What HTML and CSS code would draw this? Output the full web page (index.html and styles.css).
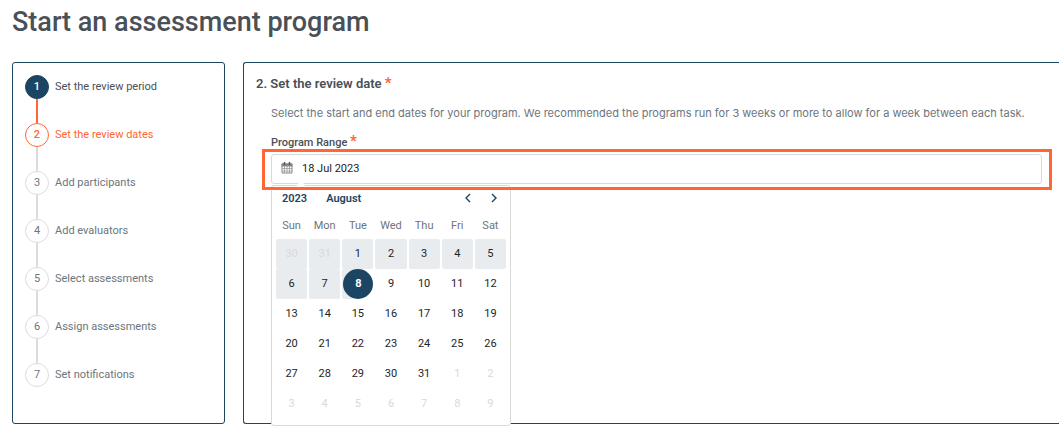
FILE: index.html
```html
<!DOCTYPE html>
<html lang="en">
<head>
    <meta charset="utf-8">
    <title>Start an assessment program</title>
    <link rel="stylesheet" href="styles.css">
</head>
<body>
    <h1 class="page-title">Start an assessment program</h1>

    <div class="layout">
        <nav class="panel steps-panel">
            <ol class="steps">
                <li class="step done"><span class="marker"><span class="number">1</span></span><span class="step-label">Set the review period</span></li>
                <li class="step active"><span class="marker"><span class="number">2</span></span><span class="step-label">Set the review dates</span></li>
                <li class="step"><span class="marker"><span class="number">3</span></span><span class="step-label">Add participants</span></li>
                <li class="step"><span class="marker"><span class="number">4</span></span><span class="step-label">Add evaluators</span></li>
                <li class="step"><span class="marker"><span class="number">5</span></span><span class="step-label">Select assessments</span></li>
                <li class="step"><span class="marker"><span class="number">6</span></span><span class="step-label">Assign assessments</span></li>
                <li class="step"><span class="marker"><span class="number">7</span></span><span class="step-label">Set notifications</span></li>
            </ol>
        </nav>

        <main class="panel form-panel">
            <h2 class="section-title">2. Set the review date <span class="required">*</span></h2>
            <form class="date-form" action="#" method="post">
                <p class="description">Select the start and end dates for your program. We recommended the programs run for 3 weeks or more to allow for a week between each task.</p>
                <label class="field-label" for="range">Program Range <span class="required">*</span></label>
                <div class="date-field">
                    <div class="input-box">
                        <svg class="calendar-icon" width="12" height="12" viewBox="0 0 12 12" aria-hidden="true">
                            <path d="M1 2h10v9H1z" fill="#fff" stroke="#888"/>
                            <path d="M.5 1.500h11v3H.5z" fill="#888"/>
                            <path d="M3.500 0v3M8.500 0v3" stroke="#555" stroke-width="1.500"/>
                            <path d="M3.500 4v7M6 4v7M8.500 4v7M1 6.500h10M1 9h10" stroke="#999" stroke-width=".8"/>
                        </svg>
                        <input type="text" id="range" name="range" value="18 Jul 2023">
                    </div>

                    <div class="calendar">
                        <div class="calendar-header">
                            <button type="button" class="year">2023</button>
                            <button type="button" class="month">August</button>
                            <button type="button" class="arrow" aria-label="Previous month">
                                <svg width="8" height="10" viewBox="0 0 8 10"><path d="M6 1L2 5l4 4" fill="none" stroke="#1b4562" stroke-width="1.400"/></svg>
                            </button>
                            <button type="button" class="arrow" aria-label="Next month">
                                <svg width="8" height="10" viewBox="0 0 8 10"><path d="M2 1l4 4-4 4" fill="none" stroke="#1b4562" stroke-width="1.400"/></svg>
                            </button>
                        </div>
                        <table class="days">
                            <thead>
                                <tr><th>Sun</th><th>Mon</th><th>Tue</th><th>Wed</th><th>Thu</th><th>Fri</th><th>Sat</th></tr>
                            </thead>
                            <tbody>
                                <tr>
                                    <td><button type="button" class="day range other">30</button></td>
                                    <td><button type="button" class="day range other">31</button></td>
                                    <td><button type="button" class="day range">1</button></td>
                                    <td><button type="button" class="day range">2</button></td>
                                    <td><button type="button" class="day range">3</button></td>
                                    <td><button type="button" class="day range">4</button></td>
                                    <td><button type="button" class="day range">5</button></td>
                                </tr>
                                <tr>
                                    <td><button type="button" class="day range">6</button></td>
                                    <td><button type="button" class="day range">7</button></td>
                                    <td><button type="button" class="day range-end"><span class="selected">8</span></button></td>
                                    <td><button type="button" class="day">9</button></td>
                                    <td><button type="button" class="day">10</button></td>
                                    <td><button type="button" class="day">11</button></td>
                                    <td><button type="button" class="day">12</button></td>
                                </tr>
                                <tr>
                                    <td><button type="button" class="day">13</button></td>
                                    <td><button type="button" class="day">14</button></td>
                                    <td><button type="button" class="day">15</button></td>
                                    <td><button type="button" class="day">16</button></td>
                                    <td><button type="button" class="day">17</button></td>
                                    <td><button type="button" class="day">18</button></td>
                                    <td><button type="button" class="day">19</button></td>
                                </tr>
                                <tr>
                                    <td><button type="button" class="day">20</button></td>
                                    <td><button type="button" class="day">21</button></td>
                                    <td><button type="button" class="day">22</button></td>
                                    <td><button type="button" class="day">23</button></td>
                                    <td><button type="button" class="day">24</button></td>
                                    <td><button type="button" class="day">25</button></td>
                                    <td><button type="button" class="day">26</button></td>
                                </tr>
                                <tr>
                                    <td><button type="button" class="day">27</button></td>
                                    <td><button type="button" class="day">28</button></td>
                                    <td><button type="button" class="day">29</button></td>
                                    <td><button type="button" class="day">30</button></td>
                                    <td><button type="button" class="day">31</button></td>
                                    <td><button type="button" class="day other">1</button></td>
                                    <td><button type="button" class="day other">2</button></td>
                                </tr>
                                <tr>
                                    <td><button type="button" class="day other">3</button></td>
                                    <td><button type="button" class="day other">4</button></td>
                                    <td><button type="button" class="day other">5</button></td>
                                    <td><button type="button" class="day other">6</button></td>
                                    <td><button type="button" class="day other">7</button></td>
                                    <td><button type="button" class="day other">8</button></td>
                                    <td><button type="button" class="day other">9</button></td>
                                </tr>
                            </tbody>
                        </table>
                    </div>
                </div>
            </form>
        </main>
    </div>
</body>
</html>
```
FILE: styles.css
```css
* {
    box-sizing: border-box;
}

body {
    margin: 0;
    padding: 4px 0 16px 12px;
    background-color: #fff;
    color: #495057;
    font-family: Roboto, Arial, sans-serif;
    font-size: 11px;
}

button,
input {
    font-family: inherit;
    font-size: inherit;
    color: inherit;
}

button {
    padding: 0;
    border: none;
    background: none;
    cursor: pointer;
}

.page-title {
    margin: 0 0 22px;
    font-size: 27px;
    font-weight: 500;
    line-height: 36px;
}

.layout {
    display: flex;
    gap: 18px;
}

.panel {
    border: 1px solid #1b4562;
    border-radius: 3px;
    padding: 12px;
}

/* steps */
.steps-panel {
    flex: 0 0 213px;
}

.steps {
    margin: 0;
    padding: 0;
    list-style: none;
}

.step {
    display: flex;
    gap: 6px;
    height: 48px;
    color: #6c757d;
}

.marker {
    display: flex;
    flex-direction: column;
    align-items: center;
}

.marker::after {
    content: "";
    flex: 1;
    width: 2px;
    background-color: #dcdcdc;
}

.step:last-child .marker::after {
    display: none;
}

.number {
    width: 24px;
    height: 24px;
    border: 1px solid #dcdcdc;
    border-radius: 50%;
    text-align: center;
    line-height: 22px;
}

.step-label {
    line-height: 24px;
}

.step.done {
    color: #495057;
}

.done .number {
    background-color: #1b4562;
    border-color: #1b4562;
    color: #fff;
    font-weight: 500;
}

.done .marker::after {
    background-color: #ff6633;
}

.step.active {
    color: #ff6633;
}

.active .number {
    border-color: #ff6633;
    font-weight: 500;
}

/* form */
.form-panel {
    flex: 1;
    min-width: 0;
    border-right: none;
    border-radius: 3px 0 0 3px;
}

.section-title {
    margin: 0 0 10px;
    font-size: 13px;
    font-weight: 600;
    line-height: 18px;
}

.required {
    color: #ff6633;
    font-size: 15px;
    font-weight: 700;
    line-height: 1;
}

.date-form {
    padding: 0 5px 0 15px;
}

.description {
    margin: 0 0 11px;
    color: #6c757d;
    font-family: Inter, sans-serif;
    line-height: 20px;
}

.field-label {
    display: block;
    margin-bottom: 3px;
    font-weight: 500;
    line-height: 16px;
}

.date-field {
    position: relative;
}

/* highlight frame around the input */
.input-box::after {
    content: "";
    position: absolute;
    inset: -5px -10px -6px -9px;
    border: 3px solid #ff6633;
    pointer-events: none;
    z-index: 2;
}

.input-box {
    display: flex;
    align-items: center;
    gap: 9px;
    height: 30px;
    padding: 0 9px 2px;
    border: 1px solid #d9d9d9;
    border-radius: 3px;
}

.input-box input {
    flex: 1;
    padding: 0;
    border: none;
    outline: none;
    color: #212529;
}

/* calendar */
.calendar {
    position: absolute;
    top: 31px;
    left: 0;
    width: 240px;
    padding: 0 3px 6px;
    background-color: #fff;
    border: 1px solid #d9d9d9;
    border-radius: 3px;
}

.calendar::before {
    content: "";
    position: absolute;
    top: -4px;
    left: 26px;
    width: 6px;
    height: 6px;
    background-color: #fff;
    transform: rotate(45deg);
}

.calendar-header {
    display: flex;
    align-items: center;
    height: 24px;
    padding: 0 0 0 7px;
    color: #1b4562;
}

.year,
.month {
    font-weight: 600;
}

.month {
    margin: 0 auto 0 19px;
}

.arrow {
    display: flex;
    justify-content: center;
    width: 26px;
}

.days {
    width: 100%;
    table-layout: fixed;
    border-collapse: collapse;
}

.days th {
    height: 29px;
    padding: 2px 0 0;
    color: #6c757d;
    font-weight: 400;
}

.days td {
    padding: 0 1px;
}

.day {
    display: block;
    width: 100%;
    height: 30px;
    padding-bottom: 2px;
    border-radius: 2px;
    color: #212529;
}

.day.range {
    background-color: #e9ecef;
}

.day.other {
    color: #d9d9d9;
}

.day.range-end {
    padding: 0;
    background: linear-gradient(to right, #e9ecef 50%, #fff 50%);
}

.selected {
    display: block;
    width: 30px;
    height: 30px;
    margin-left: auto;
    border-radius: 50%;
    background-color: #1b4562;
    color: #fff;
    font-weight: 700;
    line-height: 30px;
}
```
